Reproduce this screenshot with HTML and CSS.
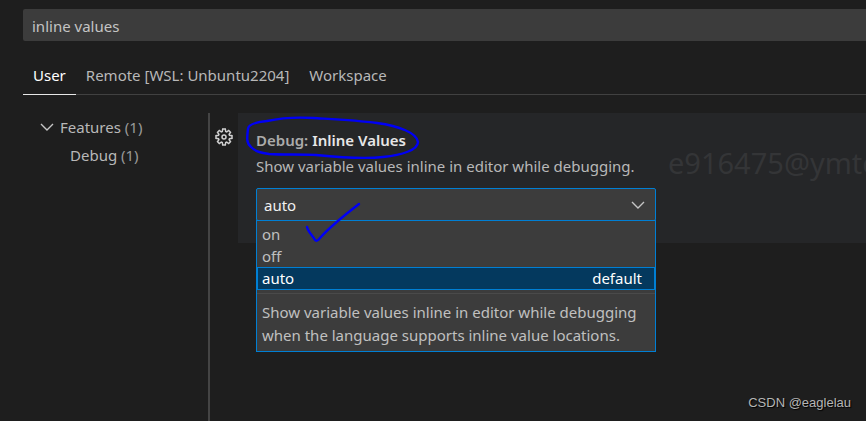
FILE: index.html
```html
<!DOCTYPE html>
<html lang="en">
<head>
<meta charset="utf-8">
<meta name="viewport" content="width=device-width, initial-scale=1">
<title>Settings</title>
<link rel="stylesheet" href="styles.css">
</head>
<body>
<div class="settings">
  <header class="search">
    <input class="search-input" type="text" value="inline values" aria-label="Search settings">
  </header>
  <nav class="tabs" aria-label="Settings scope">
    <button class="tab tab-active" type="button">User</button>
    <button class="tab" type="button">Remote [WSL: Unbuntu2204]</button>
    <button class="tab" type="button">Workspace</button>
  </nav>
  <div class="body">
    <aside class="tree">
      <a class="tree-item" href="#features">
        <svg class="chevron" viewBox="0 0 14 14" aria-hidden="true"><path d="M1 4l6 6 6-6"/></svg>
        <span>Features <span class="count">(1)</span></span>
      </a>
      <a class="tree-item tree-child" href="#debug"><span>Debug <span class="count">(1)</span></span></a>
    </aside>
    <main class="results">
      <button class="gear" type="button" aria-label="More actions">
        <svg viewBox="0 0 18 18" aria-hidden="true">
          <path d="M7.700 1h2.600l.4 2.500 1 .4 2-1.400 1.800 1.800-1.400 2 .4 1 2.500.4v2.600l-2.500.4-.4 1 1.400 2-1.800 1.800-2-1.400-1 .4-.4 2.500H7.700l-.4-2.500-1-.4-2 1.400-1.800-1.800 1.400-2-.4-1L1 10.300V7.700l2.500-.4.4-1-1.400-2 1.800-1.800 2 1.400 1-.4z"/>
          <circle cx="9" cy="9" r="2"/>
        </svg>
      </button>
      <section class="card">
        <h2 class="title"><span class="category">Debug:</span> Inline Values</h2>
        <label class="description" for="inline-values">Show variable values inline in editor while debugging.</label>
        <div class="picker">
          <select class="select" id="inline-values">
            <option>on</option>
            <option>off</option>
            <option selected>auto</option>
          </select>
          <svg class="chevron select-chevron" viewBox="0 0 14 14" aria-hidden="true"><path d="M1 4l6 6 6-6"/></svg>
          <div class="menu">
            <ul class="options" role="listbox" aria-label="Inline values">
              <li class="option" role="option">on</li>
              <li class="option" role="option">off</li>
              <li class="option option-active" role="option" aria-selected="true"><span>auto</span><span>default</span></li>
            </ul>
            <p class="details">Show variable values inline in editor while debugging<br>when the language supports inline value locations.</p>
          </div>
        </div>
        <span class="watermark" aria-hidden="true">e916475@ymtc</span>
        <svg class="ink" viewBox="0 0 200 140" aria-hidden="true">
          <path d="M29 8C19 9 10 11 10 16C9 24 8 30 13 34C18 39 24 40 31 41C46 42 63 41 78 42C98 44 127 46 145 44C164 42 180 37 180 29C179 20 161 13 139 10C117 7 91 6 75 5C59 4 43 5 29 8"/>
          <path d="M69 114C70 119 75 123 77 127Q79 129 82 125C89 117 108 101 121 91"/>
        </svg>
      </section>
    </main>
  </div>
  <footer class="credit">CSDN @eaglelau</footer>
</div>
</body>
</html>
```
FILE: styles.css
```css
* {
  box-sizing: border-box;
}

body {
  margin: 0;
  background: #1e1e1e;
  color: #b8b8b8;
  font: 15px/22px "Noto Sans", "Open Sans", sans-serif;
}

button,
input,
select {
  font: inherit;
  color: inherit;
}

.settings {
  position: relative;
  display: flex;
  flex-direction: column;
  min-height: 100vh;
  padding: 9px 0 0 23px;
  overflow: hidden;
}

.search {
  display: flex;
}

.search-input {
  flex: 1;
  height: 32px;
  padding: 2px 9px 0;
  border: 0;
  border-radius: 2px 0 0 2px;
  background: #3c3c3c;
  color: #c4c4c4;
  outline: 0;
}

.tabs {
  display: flex;
  margin-top: 16px;
  border-bottom: 1px solid #414141;
}

.tab {
  height: 38px;
  margin-bottom: -1px;
  padding: 0 10px 2px;
  border: 0;
  border-bottom: 1px solid transparent;
  background: none;
}

.tab-active {
  border-bottom-color: #e7e7e7;
  color: #fff;
}

.body {
  display: flex;
  flex: 1;
  margin-top: 18px;
}

.tree {
  flex: none;
  width: 187px;
  padding: 0 0 0 17px;
  border-right: 2px solid #444;
}

.tree-item {
  display: flex;
  align-items: center;
  gap: 6px;
  height: 28px;
  color: inherit;
  text-decoration: none;
}

.tree-child {
  padding-left: 30px;
}

.count {
  color: #999;
}

.chevron {
  width: 14px;
  height: 14px;
  fill: none;
  stroke: #c5c5c5;
  stroke-width: 1.4;
}

.results {
  display: flex;
  flex: 1;
  align-items: flex-start;
  min-width: 0;
}

.gear {
  flex: none;
  width: 28px;
  height: 48px;
  padding: 0 5px;
  border: 0;
  background: none;
}

.gear svg {
  display: block;
  width: 18px;
  height: 18px;
  fill: none;
  stroke: #d0d0d0;
  stroke-width: 1.5;
}

.card {
  position: relative;
  flex: 1;
  min-width: 0;
  padding: 16px 18px 22px;
  background: #252628;
}

.title {
  margin: 0 0 4px;
  color: #e7e7e7;
  font-size: 15px;
  font-weight: 600;
}

.category {
  color: #ababab;
}

.description {
  display: block;
  margin-bottom: 11px;
}

.picker {
  position: relative;
  max-width: 400px;
}

.select {
  display: block;
  width: 100%;
  height: 33px;
  padding: 0 7px;
  appearance: none;
  border: 1px solid #007fd4;
  border-radius: 2px;
  background: #3c3c3c;
  color: #f0f0f0;
  outline: 0;
}

.select-chevron {
  position: absolute;
  top: 10px;
  right: 11px;
  pointer-events: none;
}

.menu {
  position: absolute;
  top: 32px;
  left: 0;
  right: 0;
  z-index: 1;
  border: 1px solid #007fd4;
  background: #3c3c3c;
  color: #c0c0c0;
}

.options {
  margin: 0;
  padding: 2px 0 3px;
  border-bottom: 1px solid #4a4a4a;
  list-style: none;
}

.option {
  display: flex;
  justify-content: space-between;
  height: 22px;
  padding: 0 13px 0 5px;
}

.option-active {
  height: 23px;
  padding: 0 12px 0 4px;
  border: 1px solid #007fd4;
  background: #04395e;
  color: #fff;
  line-height: 21px;
}

.details {
  margin: 0;
  padding: 7px 5px 4px;
  line-height: 23px;
  white-space: nowrap;
}

.watermark {
  position: absolute;
  top: 31px;
  left: 430px;
  color: #343537;
  font: 29px/38px "Noto Sans", "Open Sans", sans-serif;
}

.ink {
  position: absolute;
  top: 0;
  left: 0;
  z-index: 2;
  width: 200px;
  height: 140px;
  fill: none;
  stroke: #0000f5;
  stroke-width: 2.4;
  stroke-linecap: round;
  pointer-events: none;
}

.credit {
  position: absolute;
  right: 15px;
  bottom: 8px;
  color: #b5b5b5;
  font: 13px/20px "Liberation Sans", sans-serif;
  text-shadow: 1px 1px 1px #000;
}
```
